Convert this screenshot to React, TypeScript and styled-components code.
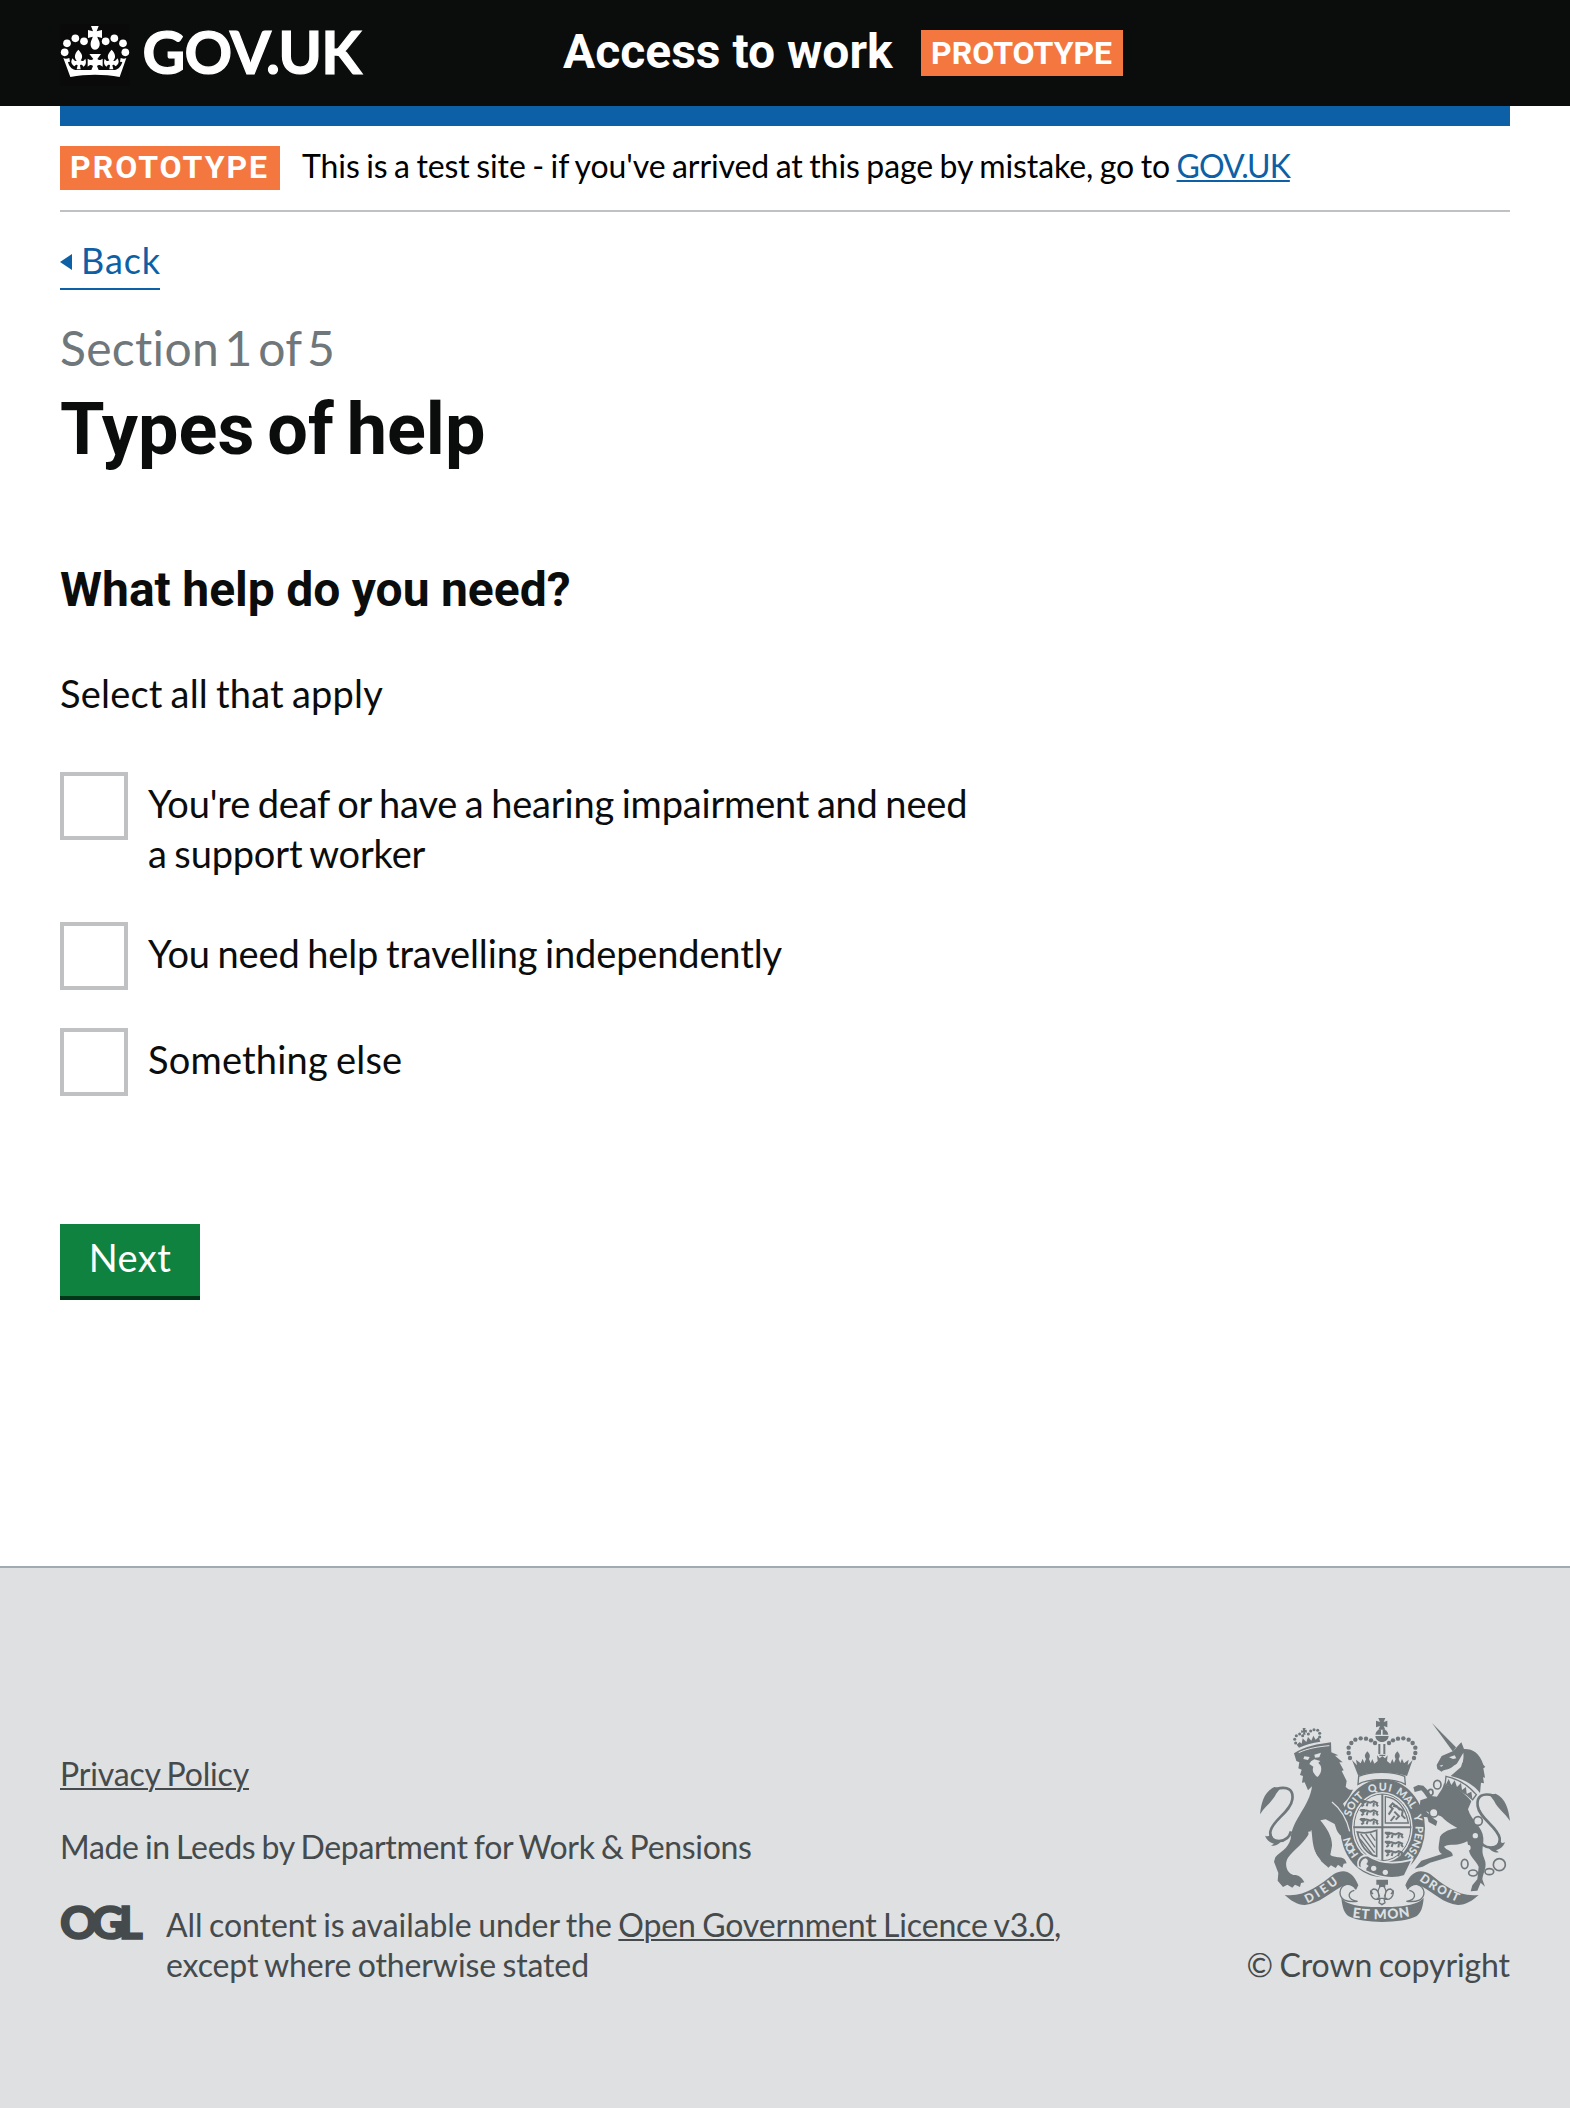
import React from 'react';
import styled, { createGlobalStyle } from 'styled-components';

const BODY_FONT = `Lato, 'Noto Sans', Arial, sans-serif`;
const BOLD_FONT = `Roboto, 'Noto Sans', Arial, sans-serif`;

const GlobalStyle = createGlobalStyle`
  body {
    margin: 0;
    background: #fff;
    color: #0b0c0c;
    font-family: ${BODY_FONT};
  }
  *, *::before, *::after { box-sizing: border-box; }
`;

/* Shared text run: spacing is tuned per line through props. */
const Run = styled.span<{ $track?: number; $word?: number }>`
  letter-spacing: ${p => p.$track ?? 0}px;
  word-spacing: ${p => (p.$word !== undefined ? `${p.$word}px` : '-0.05em')};
  font-variant-ligatures: none;
  white-space: pre;
`;

const Header = styled.header`
  display: flex;
  align-items: flex-start;
  height: 106px;
  padding: 0 60px;
  background: #0b0c0c;
  color: #fff;
`;

const Logo = styled.a`
  display: flex;
  width: 503px;
  color: #fff;
  text-decoration: none;
`;

const CrownIcon = styled.svg`
  width: 70px;
  height: 62px;
  margin-top: 24px;
  background: #0a0a0a;
`;

const LogoText = styled.span`
  margin: 17px 0 0 12.5px;
  font: 700 59px/70px ${BODY_FONT};
  letter-spacing: -0.8px;
  -webkit-text-stroke: 1.2px #fff;
`;

const ServiceName = styled.span`
  margin-top: 22px;
  width: 358px;
  font: 700 48px/60px ${BOLD_FONT};
`;

const Tag = styled.strong<{ $spaced?: boolean }>`
  display: block;
  flex: none;
  height: ${p => (p.$spaced ? 44 : 46)}px;
  width: ${p => (p.$spaced ? 220 : 202)}px;
  margin-top: ${p => (p.$spaced ? 0 : 30)}px;
  padding-left: 10px;
  background: #f47740;
  color: #fff;
  font: 700 32px/${p => (p.$spaced ? 42 : 46)}px ${BOLD_FONT};
  letter-spacing: ${p => (p.$spaced ? 2 : 0)}px;
`;

const Container = styled.div`
  margin: 0 60px;
`;

const BlueBar = styled.div`
  height: 20px;
  background: #0d60a5;
`;

const PhaseBanner = styled.div`
  display: flex;
  height: 86px;
  padding-top: 20px;
  border-bottom: 2px solid #bfc1c3;
`;

const PhaseText = styled.p`
  margin: 0 0 0 22px;
  color: #000;
  font-size: 32px;
  line-height: 40px;
`;

const Link = styled.a<{ $color: string }>`
  color: ${p => p.$color};
  text-decoration: underline;
  text-decoration-thickness: 2px;
  text-underline-offset: 2px;
`;

const BackLink = styled.a`
  display: flex;
  width: 100px;
  height: 48px;
  margin-top: 30px;
  border-bottom: 2px solid #0d60a5;
  color: #0d60a5;
  font-size: 36px;
  line-height: 37px;
  text-decoration: none;
`;

const BackArrow = styled.span`
  width: 0;
  height: 0;
  margin: 12px 9px 0 0;
  border: solid transparent;
  border-width: 8px 12px 8px 0;
  border-right-color: #0d60a5;
`;

const Caption = styled.p`
  margin: 28px 0 0;
  color: #6f777b;
  font-size: 48px;
  line-height: 60px;
`;

const Title = styled.h1`
  margin: 12px 0 0;
  font: 700 72px/80px ${BOLD_FONT};
`;

const Question = styled.h2`
  margin: 90px 0 0;
  font: 700 48px/60px ${BOLD_FONT};
`;

const Hint = styled.p`
  margin: 48px 0 0;
  font-size: 38px;
  line-height: 50px;
`;

const Choices = styled.div`
  display: flex;
  flex-direction: column;
  gap: 38px;
  margin-top: 54px;
`;

const Choice = styled.label`
  display: flex;
  min-height: 68px;
`;

const Box = styled.span`
  flex: none;
  width: 68px;
  height: 68px;
  border: 4px solid #bfc1c3;
  background: #fff;
`;

const ChoiceText = styled.span`
  display: flex;
  flex-direction: column;
  padding: 6px 0 6px 20px;
  font-size: 38px;
  line-height: 50px;
`;

const NextButton = styled.button`
  display: block;
  width: 140px;
  height: 76px;
  margin: 128px 0 266px;
  padding: 0 0 6px;
  border: 0;
  border-bottom: 4px solid #003618;
  background: #10823f;
  color: #fff;
  font: 400 38px/50px ${BODY_FONT};
`;

const Footer = styled.footer`
  display: flex;
  justify-content: space-between;
  height: 542px;
  padding: 150px 60px 0;
  border-top: 2px solid #a1acb2;
  background: #dee0e2;
  color: #454a4c;
  font-size: 32px;
  line-height: 40px;
`;

const FooterMeta = styled.div`
  display: flex;
  flex-direction: column;
  padding-top: 36px;
`;

const FooterLine = styled.p<{ $gap?: number }>`
  margin: ${p => p.$gap ?? 0}px 0 0;
`;

const Licence = styled.div`
  display: flex;
  margin-top: 38px;
`;

const OglMark = styled.span`
  width: 106px;
  font: 900 46px/33px ${BODY_FONT};
  letter-spacing: -6px;
  -webkit-text-stroke: 1.6px #454a4c;
`;

const Copyright = styled.div`
  display: flex;
  flex-direction: column;
  align-items: flex-end;
`;

const CrestArt = styled.svg`
  width: 250px;
  height: 204px;
  margin-bottom: 23px;
`;

function Crown() {
  const beads = [[74, 157], [81, 130], [106, 115], [132, 124], [197, 124], [223, 115], [249, 130], [256, 157]];
  const fleur = 'M115 149c-12 13-13 23-5 33c-5 3-9-2-12-7c-8 11-3 18 5 24c4-6 8-6 10-3l-3 12h12l-2-12c4-3 7-1 10 4c9-5 9-15 6-24c-3 5-8 10-14 5c8-10 5-20-7-32z';
  return (
    <CrownIcon viewBox="60 72 210 186" fill="#fff" aria-hidden="true">
      {beads.map(([x, y]) => <circle key={x} cx={x} cy={y} r="11.5" />)}
      <path d="M153 78h23l-6 16 16-4v24l-14-4c0 5 6 10 7 19 1 12-5 20-14 20s-14-8-13-20c1-9 6-14 6-19l-14 4V90l15 4z" />
      <path d="M70 174c5 3 10 3 18 0l2 11-6 1c2 10 9 21 22 24h119c13-3 19-14 22-24l-7-1 2-11c8 3 12 3 17 0l-20 57c-48-9-100-9-148 0z" />
      <path d={fleur} />
      <path d={fleur} transform="translate(330 0) scale(-1 1)" />
      <path d="M148 162h35l-11 15c5 5 10 3 16-1v24c-7-6-13-7-17-2l5 12h-22l5-12c-5-5-10-4-16 2v-24c6 4 12 6 17 1z" />
    </CrownIcon>
  );
}

const INK = '#6f777b';
const PAPER = '#dee0e2';

function TailLoop() {
  return (
    <>
      <path d="M60 343c4-36 13-68 43-82l18 4-13 17c-12 25-31 34-48 61z" />
      <path d="M108 267c36-10 53 2 49 31c-5 38-60 62-66 97c-2 22 12 27 26 28c20-1 32-13 36-29" fill="none" stroke={INK} strokeWidth="8" />
      <path d="M75 407c10 4 15 1 17-9l10 22 22 4c-12 13-20 14-31 13l9-6c-11-3-21-9-27-24z" />
    </>
  );
}

function Quarter({ x, y }: { x: number; y: number }) {
  return (
    <g fill="none" stroke={INK} strokeWidth="6">
      {[0, 27, 54].map(d => (
        <path key={d} d={`M${x} ${y + d}l9 8 9-6 13 4 10-4 13 6M${x + 4} ${y + d + 17}l8-6M${x + 20} ${y + d + 17}l3-10M${x + 40} ${y + d + 18}l2-11M${x + 54} ${y + d + 17}l-6-8M${x + 3} ${y + d + 1}h12`} />
      ))}
    </g>
  );
}

/* Clockwise arc of the garter lettering baseline, angles in degrees. */
function garterArc(from: number, to: number) {
  const at = (a: number) => {
    const r = (a * Math.PI) / 180;
    return `${(427 + 99 * Math.cos(r)).toFixed(1)} ${(384 + 112 * Math.sin(r)).toFixed(1)}`;
  };
  return `M${at(from)}A99 112 0 0 1 ${at(to)}`;
}

const GARTER_WORDS: [string, number, number, number][] = [
  ['HON', 135, 175, 60], ['SOIT', 197, 243, 74], ['QUI', 247, 288, 66], ['MAL', 293, 336, 68], ['Y', 340, 356, 18], ['PENSE', 357, 415, 98],
];

function Crest() {
  const arch = [[330, 174], [326, 159], [326, 143], [334, 129], [346, 119], [362, 115], [378, 116], [393, 121], [405, 129]];
  const lionBeads = [[167, 129], [164, 118], [169, 107], [179, 102], [188, 107], [205, 102], [212, 93], [222, 89], [233, 91], [239, 100], [239, 111]];
  return (
    <CrestArt viewBox="60 54 750 612" fill={INK} role="img" aria-label="Royal coat of arms">
      {/* large crown */}
      <path d="M415 54h21l-5 12 11-4v20l-11-4 5 11h-21l5-11-12 4V62l12 4z" />
      <path d="M406 104a19 19 0 0 1 17-16v16zM428 104V88a19 19 0 0 1 17 16zM406 108h40c-1 11-9 18-20 18s-19-7-20-18z" />
      {arch.map(([x, y]) => <React.Fragment key={`${x}-${y}`}><circle cx={x} cy={y} r="6.6" /><circle cx={852 - x} cy={y} r="6.6" /></React.Fragment>)}
      <path d="M415 132h6v30h-6zM430 132h6v30h-6z" />
      <path d="M336 180l15 16-3-17 14 11 6-14 5 13 5-12c-6-9-3-15 4-23c8 8 10 15 5 23l5 12 5-12 6 14 10-8-2-17 8 9 8-7h-8l-2-4h20l-2 4h-8l8 7 8-9-2 17 10 8 6-14 5 12 5-12c-5-8-3-15 5-23c7 8 10 14 4 23l5 12 5-13 6 14 14-11-3 17 15-16-17 48c-40-14-110-14-146 0z" />
      <path d="M356 229c38-16 100-16 138 0l2 24c-30-19-112-19-142 0z" fill={PAPER} stroke={INK} strokeWidth="4" />

      {/* garter and shield */}
      <ellipse cx="428" cy="385" rx="127" ry="147" />
      <ellipse cx="427" cy="382" rx="91" ry="106" fill={PAPER} />
      <ellipse cx="427" cy="382" rx="85" ry="100" fill="none" stroke={INK} strokeWidth="3" />
      <path d="M424 282h6v202h-6zM340 379h174v6H340z" />
      <Quarter x={360} y={302} />
      <Quarter x={435} y={397} />
      <path d="M436 290c30 4 58 25 69 79h-69z" fill="none" stroke={INK} strokeWidth="4" />
      <path d="M446 344l12-18-8-7 8-9 12 10 18 12-2 14 10 10M463 335l14 14-10 10M452 363l12-15M459 317l14 4M480 330l-12-14" fill="none" stroke={INK} strokeWidth="6" />
      <path d="M352 396c18 4 40 3 58-5v78c-29-6-48-30-58-73z" fill="none" stroke={INK} strokeWidth="5" />
      <path d="M362 402l42 56M377 402l28 40M391 401l15 21M360 417l38 48" stroke={INK} strokeWidth="4" />

      {/* garter buckle */}
      <path d="M355 500c-5-21 8-34 27-34c37 26 82 27 135 13l-23 48c-40 14-91 4-139-27z" stroke={PAPER} strokeWidth="5" />
      <path d="M365 506c-8-11-2-28 12-31c9 5 8 12 2 17l7 6-7 7c3 8-6 9-14 1z" fill={PAPER} />
      <circle cx="401" cy="505" r="8" fill={PAPER} /><circle cx="436" cy="517" r="8" fill={PAPER} />

      <defs>
        {GARTER_WORDS.map(([word, from, to]) => <path key={word} id={`garter-${word}`} d={garterArc(from, to)} />)}
        <path id="scroll-left" d="M202 610Q250 588 306 540" />
        <path id="scroll-mid" d="M337 652Q426 665 516 648" />
        <path id="scroll-right" d="M537 541Q590 580 656 608" />
      </defs>

      {/* lion */}
      {lionBeads.map(([x, y]) => <circle key={`${x}-${y}`} cx={x} cy={y} r="4.6" />)}
      <path d="M188 84h9l-2 6 5-1 1 9-6-1 2 7h-8l1-7-6 2-1-8 6 1z" />
      <path d="M170 134l9-8 6 5 3-16 11 11 5-15 10 11 6-15 7 12 9-8 5 14c-24 3-44 9-64 18z" />
      <path d="M162 160c34-22 72-28 111-33l1 30 21 9-10 1 23 20-10 0 13 24-6 2 15 30-3 18c8 8 14 9 22 8-10 20-15 27-30 42 8 15 20 40 27 73l-7 25-13 3c-14-2-21-12-26-22l-6-18-27-14-16 3c20 24 36 50 35 76l-5 28c20 13 42-2 49 25l-9 1-4 12-13-9-7 10-14-8-8 7c-8-9-21-15-31-31c-18-29-16-59-20-83c-19 39-53 60-70 84c-12 19-4 46 16 52c15-1 26 7 33 22l-10 2-3 12-15-7-8 9-15-9-13 7-16-19 2-23-13-34 4-13c14-17 37-23 46-55c4-59 57-97 64-158l-12 12-10-24-8 1 3-20-9-3 5-16-10-4 3-18-9-4z" />
      <path d="M193 169l16 2-5 9-14-3zM223 164l20-6-5 14-13 1zM213 184l10-6 18 5-6 5 7 9c4 12 1 25-10 34-13-12-16-19-12-31l-12-8z" fill={PAPER} />
      <path d="M176 158c28-13 58-18 92-21" fill="none" stroke={PAPER} strokeWidth="3" />
      <path d="M276 306c28 22 44 50 53 88" fill="none" stroke={PAPER} strokeWidth="4" />
      <path d="M207 395c7 40 9 60 34 88" fill="none" stroke={PAPER} strokeWidth="5" />
      <TailLoop />

      {/* unicorn */}
      <path d="M576 69l72 73-9 13z" />
      <path d="M640 153l16-18 8-8 8 20c25-1 47 12 58 47l6 7-6 4 5 28-6-1 3 18-9-2-3 31c-22-29-55-43-88-51l31-27 6-21-28 17c-14 14-28 9-36 18l-13-8-2-12 15-27z" />
      <path d="M627 172l17-6 5 9-10 2zM598 197l12-3-5 6zM640 209c25-8 33-24 30-51" fill={PAPER} />
      <path d="M612 250C645 258 675 280 694 304L684 328C696 366 728 380 730 414C731 440 722 452 733 476C744 500 728 520 727 538L735 560L722 548L712 572L692 574L697 556L712 538L716 500C706 478 692 474 687 452L682 424C655 440 630 430 612 440C620 452 640 452 638 468L570 488L548 500L524 506L544 482L606 462C590 452 597 436 600 410C612 392 632 388 652 384C625 368 596 352 588 318C580 290 606 280 612 250z" />
      <path d="M520 262L535 255L550 257Q566 270 574 288L602 292L598 322L560 318L540 312L541 301L562 294Q552 278 544 271L524 276z" />
      <path d="M604 322L560 306Q534 310 536 322L545 350L562 352L566 366L588 378L592 364L576 352L558 334L612 352z" />
      <path d="M618 229c37 8 67 27 91 55l-11 15c-26-25-52-39-83-43z" fill={PAPER} stroke={INK} strokeWidth="4" />
      <path d="M617 255l9-18 8 18 10-14 7 20 12-12 3 21 12-9 2 21 14-7 3 21c-28-25-53-33-80-41z" />
      <g transform="translate(870 20) scale(-1 1)"><TailLoop /></g>

      {/* chain */}
      <g fill="none" stroke={INK} strokeWidth="5">
        <ellipse cx="592" cy="254" rx="11" ry="13" /><ellipse cx="572" cy="277" rx="7" ry="9" />
        <circle cx="581" cy="338" r="13" fill={PAPER} /><circle cx="714" cy="363" r="13" fill={PAPER} />
        <ellipse cx="674" cy="492" rx="10" ry="14" /><ellipse cx="699" cy="519" rx="13" ry="9" />
        <ellipse cx="748" cy="515" rx="13" ry="9" /><circle cx="778" cy="494" r="18" />
      </g>
      <circle cx="706" cy="407" r="8" fill={PAPER} /><circle cx="683" cy="443" r="9" fill={PAPER} />

      <g fill={PAPER} fontFamily={BODY_FONT} fontWeight="900" fontSize="32">
        {GARTER_WORDS.map(([word, , , length]) => (
          <text key={word}><textPath href={`#garter-${word}`} textLength={length}>{word}</textPath></text>
        ))}
      </g>

      {/* motto scroll */}
      <path d="M134 585c57 8 104-29 148-63c34-20 59-3 73 34l-7 14c-11-15-27-19-44-10c-35 18-65 50-110 55c-23 0-40-13-60-30z" />
      <path d="M716 585c-57 8-104-29-146-63c-34-20-60-3-74 34l7 14c11-15 27-19 44-10c35 18 62 50 107 55c24 0 43-13 62-30z" />
      <path d="M347 567c-11-25-45-15-47 10c0 23 19 30 53 27M353 604c-32-3-32-27-10-33M502 567c11-25 47-15 50 10c0 23-20 30-53 27M499 604c31-3 31-27 9-33" fill="none" stroke={INK} strokeWidth="4" />
      <path d="M304 593c17 25 66 28 122 28s108-5 125-28c-2 30-8 45-22 56-42 22-160 23-203 0-14-11-19-26-22-56z" />
      <g fill={PAPER} fontFamily={BODY_FONT} fontWeight="900" fontSize="41">
        <text><textPath href="#scroll-left" textLength="112" fontSize="36">DIEU</textPath></text>
        <text><textPath href="#scroll-mid" textLength="174">ET MON</textPath></text>
        <text><textPath href="#scroll-right" textLength="132" fontSize="36">DROIT</textPath></text>
      </g>

      {/* fleur-de-lis */}
      <path d="M409 539h35v15h-8v7h-19v-7h-8z" />
      <path d="M426 554c-17 15-12 22-7 36M426 554c17 15 12 22 7 36M417 594c0-21-7-27-16-27-8 2-9 11-2 15l-7-8c-1 18 12 27 25 23M435 594c0-21 7-27 16-27 8 2 9 11 2 15l7-8c1 18-12 27-25 23M410 595h32M420 597l-3 11 9 6 9-6-3-11" fill="none" stroke={INK} strokeWidth="4" />
    </CrestArt>
  );
}

export default function App() {
  return (
    <>
      <GlobalStyle />
      <Header>
        <Logo href="#">
          <Crown />
          <LogoText>GOV.UK</LogoText>
        </Logo>
        <ServiceName>Access to work</ServiceName>
        <Tag>PROTOTYPE</Tag>
      </Header>

      <Container>
        <BlueBar />
        <PhaseBanner>
          <Tag $spaced>PROTOTYPE</Tag>
          <PhaseText>
            <Run $track={-0.08}>{"This is a test site - if you've arrived at this page by mistake, go to "}</Run>
            <Link href="#" $color="#0d60a5"><Run $track={-1}>GOV.UK</Run></Link>
          </PhaseText>
        </PhaseBanner>

        <BackLink href="#"><BackArrow /><Run $track={0.9}>Back</Run></BackLink>

        <Caption><Run $track={0.3} $word={-7}>Section 1 of 5</Run></Caption>
        <Title><Run $track={0} $word={-5}>Types of help</Run></Title>

        <Question><Run $word={-0.5}>What help do you need?</Run></Question>
        <Hint><Run $track={0.2}>Select all that apply</Run></Hint>

        <Choices>
          <Choice>
            <Box />
            <ChoiceText>
              <Run $track={-0.18}>You're deaf or have a hearing impairment and need</Run>
              <Run $track={-0.18}>a support worker</Run>
            </ChoiceText>
          </Choice>
          <Choice><Box /><ChoiceText><Run $track={-0.14}>You need help travelling independently</Run></ChoiceText></Choice>
          <Choice><Box /><ChoiceText><Run $track={0.2}>Something else</Run></ChoiceText></Choice>
        </Choices>

        <NextButton type="button"><Run $track={0.4}>Next</Run></NextButton>
      </Container>

      <Footer>
        <FooterMeta>
          <FooterLine><Link href="#" $color="#454a4c"><Run $track={-0.17}>Privacy Policy</Run></Link></FooterLine>
          <FooterLine $gap={33}><Run $track={-0.32}>{'Made in Leeds by Department for Work & Pensions'}</Run></FooterLine>
          <Licence>
            <OglMark>OGL</OglMark>
            <FooterLine>
              <Run $track={-0.07}>{'All content is available under the '}</Run>
              <Link href="#" $color="#454a4c"><Run $track={-0.14}>Open Government Licence v3.0</Run></Link>,
              <br />
              <Run $track={-0.12}>except where otherwise stated</Run>
            </FooterLine>
          </Licence>
        </FooterMeta>
        <Copyright>
          <Crest />
          <Run $track={-0.1}>© Crown copyright</Run>
        </Copyright>
      </Footer>
    </>
  );
}
